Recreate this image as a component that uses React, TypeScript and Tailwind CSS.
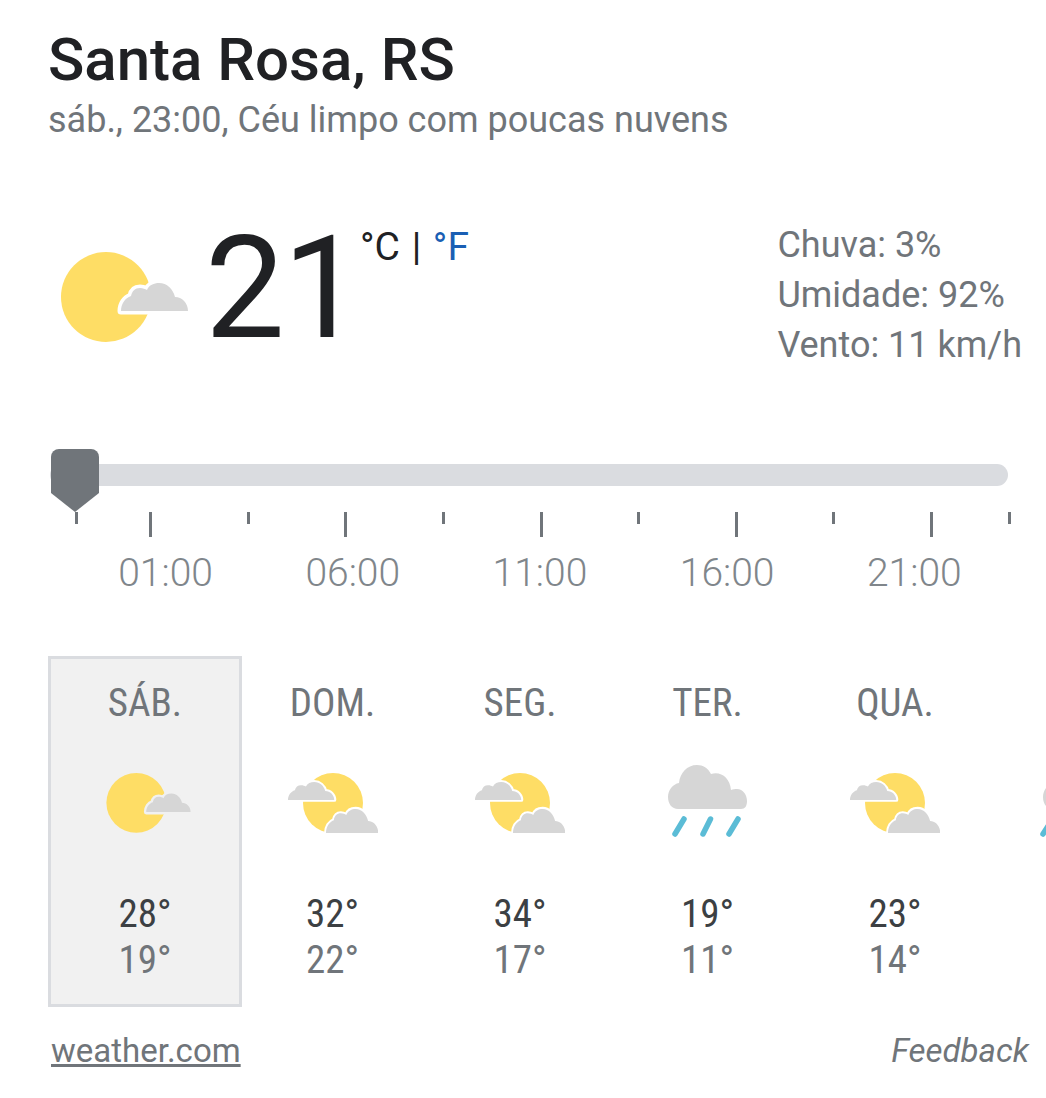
const CLOUD = "M0 28C0 21 4 15 10 13C11 8 14 5 19 5C22 5 24 6 26 7C28 2 33 0 38 0C46 0 52 6 54 14C61 14 67 20 67 28Z";
const RAIN_CLOUD = "M10 44C4 44 0 39 0 32C0 25 5 19 11 18C12 8 19 0 29 0C35 0 40 3 43 9C53 6 62 13 63 25C65 24 67 24 69 24C75 24 79 30 79 36C79 41 77 44 73 44Z";

function SunCloud({ bg = "#ffffff", className = "" }: { bg?: string; className?: string }) {
  return (
    <svg viewBox="0 0 130 92" className={className}>
      <circle cx="45" cy="45" r="45" fill="#fedd65" />
      <path d={CLOUD} transform="translate(60 31)" fill="#d6d6d6" stroke={bg} strokeWidth="7" paintOrder="stroke" strokeLinejoin="round" />
    </svg>
  );
}

function PartlyCloudy() {
  return (
    <svg viewBox="0 0 90 60" className="w-[90px] h-[60px]">
      <circle cx="45" cy="30" r="30" fill="#fedd65" />
      <path d={CLOUD} transform="translate(0 9) scale(0.69 0.64)" fill="#d6d6d6" stroke="#ffffff" strokeWidth="6" paintOrder="stroke" strokeLinejoin="round" />
      <path d={CLOUD} transform="translate(38 36) scale(0.78 0.86)" fill="#d6d6d6" stroke="#ffffff" strokeWidth="5" paintOrder="stroke" strokeLinejoin="round" />
    </svg>
  );
}

function Rain({ edgeDrop = false }: { edgeDrop?: boolean }) {
  return (
    <svg viewBox="0 0 80 74" className="w-[80px] h-[74px] mt-[-3px] overflow-visible">
      <path d={RAIN_CLOUD} fill="#d6d6d6" />
      <g stroke="#5bbcd6" strokeWidth="5.5" strokeLinecap="round">
        {edgeDrop ? <line x1="0" y1="69" x2="7" y2="58" /> : <line x1="7" y1="69" x2="16" y2="54" />}
        <line x1="35" y1="69" x2="42.5" y2="54" />
        <line x1="61" y1="69" x2="70" y2="54" />
      </g>
    </svg>
  );
}

const days = [
  { name: "SÁB.", hi: "28°", lo: "19°", icon: "sun" },
  { name: "DOM.", hi: "32°", lo: "22°", icon: "partly" },
  { name: "SEG.", hi: "34°", lo: "17°", icon: "partly" },
  { name: "TER.", hi: "19°", lo: "11°", icon: "rain" },
  { name: "QUA.", hi: "23°", lo: "14°", icon: "partly" },
  // only the edge of this icon shows in the screenshot
  { name: "", hi: "", lo: "", icon: "showers" },
];

function DayIcon({ icon }: { icon: string }) {
  if (icon === "sun") return <SunCloud bg="#f1f1f1" className="w-[87px] h-[61px] ml-[8px]" />;
  if (icon === "rain") return <Rain />;
  if (icon === "showers") return <Rain edgeDrop />;
  return <PartlyCloudy />;
}

export default function App() {
  return (
    <div className="w-[1046px] h-[1098px] overflow-hidden bg-white font-['Roboto',sans-serif]">
      <div className="pl-[48px] pt-[26px]">
        <h1 className="text-[60px] leading-[68px] font-medium text-[#202124]">Santa Rosa, RS</h1>
        <p className="text-[36px] leading-[52px] text-[#70757a]">sáb., 23:00, Céu limpo com poucas nuvens</p>
      </div>

      <div className="flex mt-[62px] h-[211px]">
        <SunCloud className="w-[130px] h-[92px] ml-[61px] mt-[44px] shrink-0" />
        <div className="ml-[14px] mt-[-4px] h-[170px] text-[142px] leading-[170px] tracking-[-2px] text-[#202124] font-normal w-[155px] shrink-0">21</div>
        <div className="text-[39px] leading-[46px] mt-[16px] text-[#202124] whitespace-nowrap">
          °C <span className="mx-[2px]">|</span> <span className="text-[#1a5fb4]">°F</span>
        </div>
        <div className="ml-auto pr-[24px] text-[36px] leading-[50px] mt-[12px] text-[#70757a]">
          <div>Chuva: 3%</div>
          <div>Umidade: 92%</div>
          <div>Vento: 11 km/h</div>
        </div>
      </div>

      <div className="relative mt-[45px] ml-[50px] w-[958px] h-[22px] rounded-full bg-[#dadce0]">
        <svg viewBox="0 0 48 63" className="absolute left-[1px] top-[-15px] w-[48px] h-[63px]">
          <path d="M8 0H40A8 8 0 0 1 48 8V44L24 63L0 44V8A8 8 0 0 1 8 0Z" fill="#70757a" />
        </svg>
      </div>

      <div className="flex items-start ml-[75px] w-[936px] mt-[26px] h-[26px]">
        <div className="w-[3px] h-[12px] bg-[#70757a] shrink-0" />
        <div className="w-[71px] shrink-0" />
        <div className="flex flex-1 justify-between items-start">
          {[0, 1, 2, 3, 4, 5, 6, 7, 8].map((i) => (
            <div key={i} className={i % 2 === 0 ? "w-[3px] h-[25px] bg-[#70757a]" : "w-[3px] h-[12px] bg-[#70757a]"} />
          ))}
        </div>
        <div className="w-[75px] shrink-0" />
        <div className="w-[3px] h-[12px] bg-[#70757a] shrink-0" />
      </div>

      <div className="flex ml-[72px] mt-[14px] text-[39px] leading-[42px] font-light text-[#80868b]">
        {["01:00", "06:00", "11:00", "16:00", "21:00"].map((t) => (
          <div key={t} className="w-[187.2px] text-center">{t}</div>
        ))}
      </div>

      <div className="flex ml-[48px] mt-[62px]">
        {days.map((d, i) => (
          <div
            key={i}
            className={
              i === 0
                ? "w-[194px] h-[351px] shrink-0 mr-[-6.5px] flex flex-col items-center border-[3px] border-[#dadce0] bg-[#f1f1f1]"
                : "w-[194px] h-[351px] shrink-0 mr-[-6.5px] flex flex-col items-center border-[3px] border-transparent"
            }
          >
            <div className="mt-[22px] h-[44px] text-[39px] leading-[44px] text-[#70757a] [font-stretch:75%]">{d.name}</div>
            <div className="mt-[42px] h-[72px] flex items-center"><DayIcon icon={d.icon} /></div>
            <div className="mt-[52px] h-[46px] text-[39px] leading-[46px] text-[#3c4043] [font-stretch:75%]">{d.hi}</div>
            <div className="h-[46px] text-[39px] leading-[46px] text-[#70757a] [font-stretch:75%]">{d.lo}</div>
          </div>
        ))}
      </div>

      <div className="flex justify-between pl-[51px] pr-[17px] mt-[22px] text-[33px] leading-[44px] text-[#70757a]">
        <a className="underline">weather.com</a>
        <span className="italic">Feedback</span>
      </div>
    </div>
  );
}
